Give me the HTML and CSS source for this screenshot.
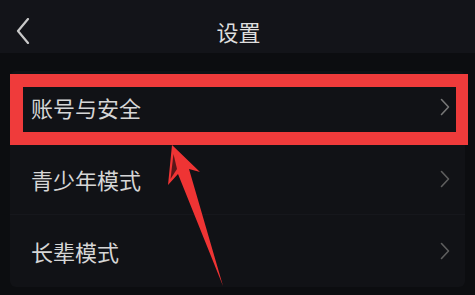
FILE: index.html
```html
<!DOCTYPE html>
<html lang="zh-CN">
<head>
<meta charset="utf-8">
<link rel="stylesheet" href="styles.css">
</head>
<body>
<div class="page">
  <header class="topbar">
    <div class="back">
      <svg width="14" height="26" viewBox="0 0 14 26"><polyline points="12,1 2,13 12,25" fill="none" stroke="#c9c9c9" stroke-width="2.2" stroke-linecap="round" stroke-linejoin="round"/></svg>
    </div>
    <div class="title">设置</div>
    <div></div>
  </header>
  <main class="content">
    <ul class="card">
      <li class="row"><span class="label">账号与安全</span><svg class="chev" width="10" height="18" viewBox="0 0 10 18"><polyline points="1.5,1.5 8.5,9 1.5,16.5" fill="none" stroke="#767676" stroke-width="1.6" stroke-linecap="round" stroke-linejoin="round"/></svg></li>
      <li class="row"><span class="label">青少年模式</span><svg class="chev" width="10" height="18" viewBox="0 0 10 18"><polyline points="1.5,1.5 8.5,9 1.5,16.5" fill="none" stroke="#5e5e5e" stroke-width="1.6" stroke-linecap="round" stroke-linejoin="round"/></svg></li>
      <li class="row"><span class="label">长辈模式</span><svg class="chev" width="10" height="18" viewBox="0 0 10 18"><polyline points="1.5,1.5 8.5,9 1.5,16.5" fill="none" stroke="#5e5e5e" stroke-width="1.6" stroke-linecap="round" stroke-linejoin="round"/></svg></li>
    </ul>
  </main>
  <div class="highlight"></div>
  <svg class="pointer" width="475" height="295" viewBox="0 0 475 295">
    <polygon points="172,145 200,172 189,169 223,286 178,174 168,185" fill="#ef3434"/>
    <polygon points="173.5,154 170.5,179 177,169" fill="#5a1618"/>
  </svg>
</div>
</body>
</html>
```

FILE: styles.css
```css
* { box-sizing: border-box; }
html, body {
  margin: 0;
  padding: 0;
  background: #0c0d10;
}
body {
  font-family: "Noto Sans CJK SC", "Noto Sans", sans-serif;
  color: #d9d9d9;
}
.page {
  position: relative;
  width: 475px;
  height: 295px;
  overflow: hidden;
}
.topbar {
  height: 53px;
  padding-top: 8px;
  background: #131419;
  display: grid;
  grid-template-columns: 1fr auto 1fr;
  align-items: center;
}
.back {
  padding-left: 16px;
  display: flex;
  align-items: center;
}
.title {
  font-size: 22px;
  line-height: 30px;
  color: #dedede;
  transform: translateX(1px);
}
.content {
  padding: 18px 10px 0;
}
.card {
  list-style: none;
  margin: 0;
  padding: 0;
  width: 455px;
  background: #111216;
  border-radius: 6px;
}
.row {
  height: 72px;
  display: flex;
  align-items: center;
  justify-content: space-between;
  padding: 0 15px 0 21px;
  border-bottom: 1px solid #16171c;
}
.row:last-child { border-bottom: none; }
.label {
  font-size: 22px;
  line-height: 30px;
  color: #d6d6d6;
}
.chev { display: block; }
.highlight {
  position: absolute;
  left: 10px;
  top: 74px;
  width: 458px;
  height: 71px;
  border: 13px solid #ef3b3b;
  border-right-width: 12px;
}
.pointer {
  position: absolute;
  left: 0;
  top: 0;
}
```
